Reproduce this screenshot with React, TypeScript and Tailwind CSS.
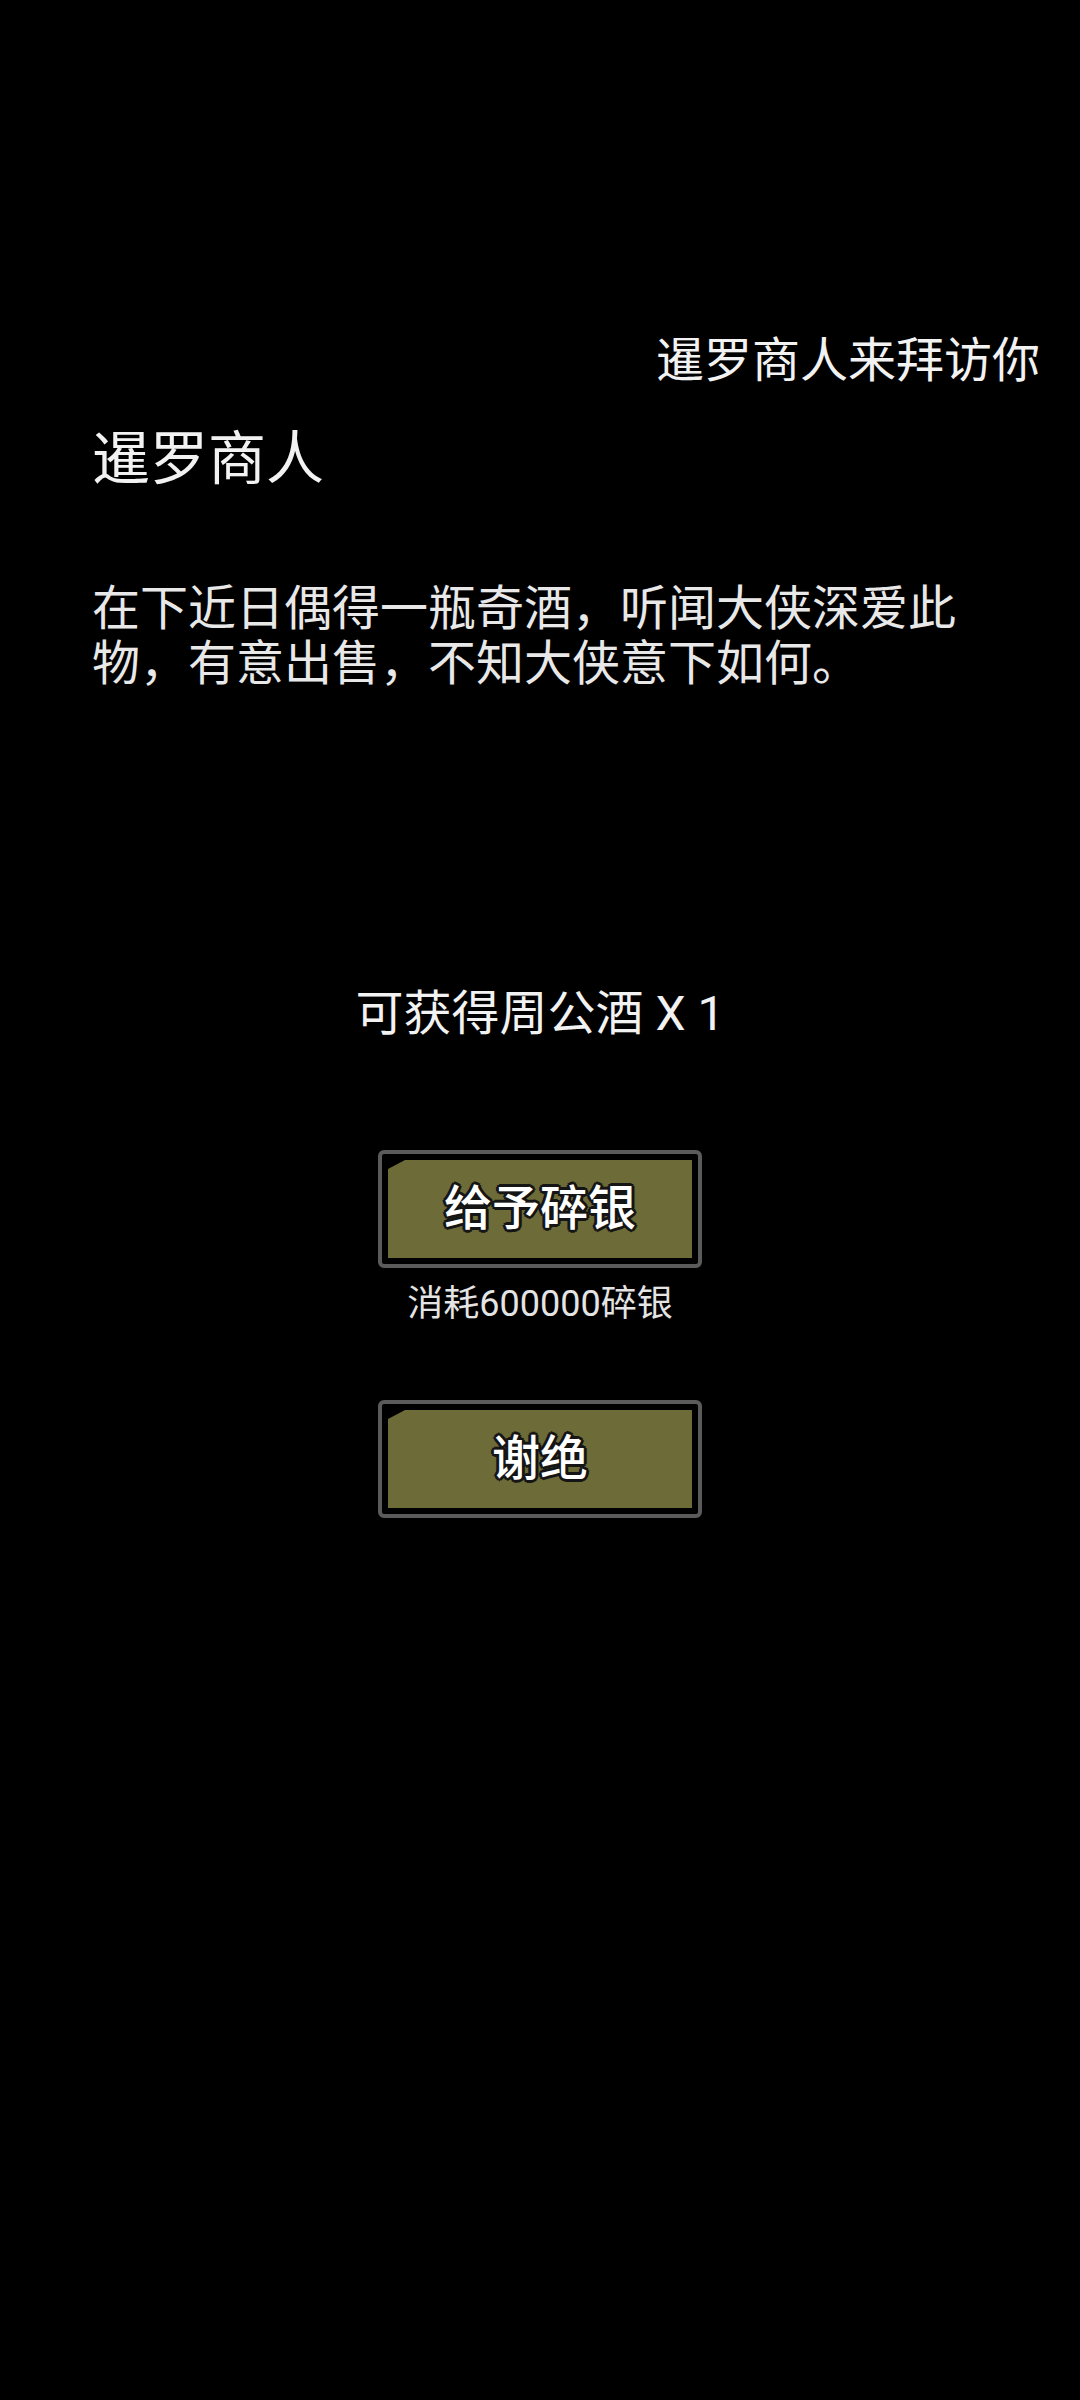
const cjk = "font-['Roboto','Noto_Sans_CJK_SC',sans-serif]";

function ChamferButton({ label }: { label: string }) {
  return (
    <div className="w-[324px] h-[118px] rounded-[6px] border-4 border-[#5b5b5b] bg-black p-[6px]">
      <div className="h-full w-full flex items-center justify-center bg-[#6d6b37] [clip-path:polygon(17px_0,100%_0,100%_100%,0_100%,0_9px)]">
        <span className="text-[48px] leading-[56px] font-medium text-white [text-shadow:3px_0_0_#151515,-3px_0_0_#151515,0_3px_0_#151515,0_-3px_0_#151515,2px_2px_0_#151515,-2px_-2px_0_#151515,2px_-2px_0_#151515,-2px_2px_0_#151515]">
          {label}
        </span>
      </div>
    </div>
  );
}

export default function App() {
  return (
    <div className={`min-h-[2400px] w-[1080px] bg-black text-[#f2f2f2] ${cjk}`}>
      {/* header */}
      <div className="pt-[333px] pr-[40px] flex justify-end">
        <span className="text-[48px] leading-[56px]">暹罗商人来拜访你</span>
      </div>

      {/* merchant */}
      <div className="pl-[92px]">
        <h2 className="mt-[38px] text-[58px] leading-[64px]">暹罗商人</h2>
        <p className="mt-[90px] w-[900px] text-[48px] leading-[55px] text-[#e8e8e8]">
          在下近日偶得一瓶奇酒，听闻大侠深爱此物，有意出售，不知大侠意下如何。
        </p>
      </div>

      {/* reward */}
      <div className="mt-[295px] text-center text-[48px] leading-[56px]">可获得周公酒 X 1</div>

      {/* choices */}
      <div className="mt-[108px] flex flex-col items-center">
        <ChamferButton label="给予碎银" />
        <div className="mt-[16px] text-[36px] leading-[40px] text-[#e4e4e4]">消耗600000碎银</div>
        <div className="mt-[76px]">
          <ChamferButton label="谢绝" />
        </div>
      </div>
    </div>
  );
}
